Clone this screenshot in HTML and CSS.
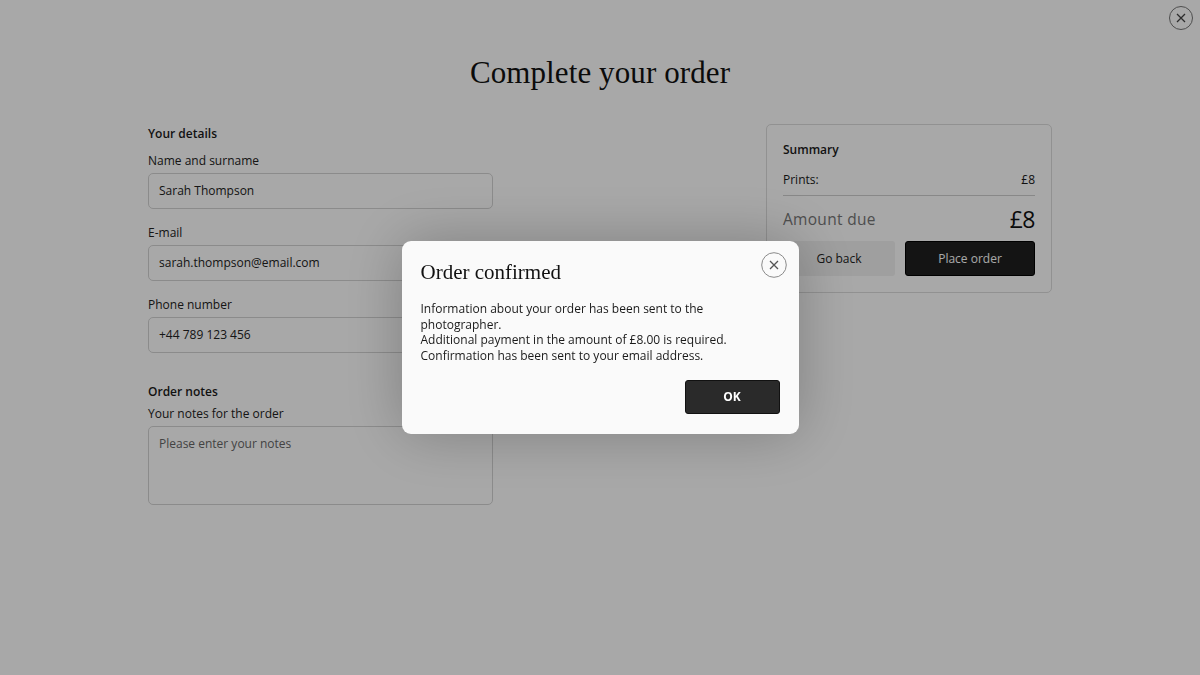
FILE: index.html
```html
<!DOCTYPE html>
<html lang="en">
<head>
<meta charset="utf-8">
<title>Complete your order</title>
<link rel="stylesheet" href="styles.css">
</head>
<body>
<div class="page">
  <button class="page-close" aria-label="Close">
    <svg viewBox="0 0 24 24" width="24" height="24"><circle cx="12" cy="12" r="11.5" fill="none" stroke="#777" stroke-width="1"/><path d="M8 8 L16 16 M16 8 L8 16" stroke="#444" stroke-width="1.3" fill="none"/></svg>
  </button>
  <h1 class="title">Complete your order</h1>
  <div class="columns">
    <form class="details">
      <h2 class="section">Your details</h2>
      <label class="field">
        <span class="label">Name and surname</span>
        <span class="input">Sarah Thompson</span>
      </label>
      <label class="field">
        <span class="label">E-mail</span>
        <span class="input">sarah.thompson@email.com</span>
      </label>
      <label class="field">
        <span class="label">Phone number</span>
        <span class="input">+44 789 123 456</span>
      </label>
      <h2 class="section notes-title">Order notes</h2>
      <label class="field">
        <span class="label">Your notes for the order</span>
        <span class="textarea">Please enter your notes</span>
      </label>
    </form>
    <aside class="summary">
      <h2 class="summary-title">Summary</h2>
      <div class="row"><span>Prints:</span><span>£8</span></div>
      <div class="due"><span class="due-label">Amount due</span><span class="due-value">£8</span></div>
      <div class="actions">
        <button class="btn-light">Go back</button>
        <button class="btn-dark">Place order</button>
      </div>
    </aside>
  </div>
</div>
<div class="overlay">
  <div class="modal">
    <div class="modal-head">
      <h3 class="modal-title">Order confirmed</h3>
      <button class="modal-close" aria-label="Close">
        <svg viewBox="0 0 26 26" width="26" height="26"><circle cx="13" cy="13" r="12.3" fill="#fafafa" stroke="#8a8a8a" stroke-width="1"/><path d="M9 9 L17 17 M17 9 L9 17" stroke="#555" stroke-width="1.3" fill="none"/></svg>
      </button>
    </div>
    <p class="modal-text">Information about your order has been sent to the photographer.<br>Additional payment in the amount of £8.00 is required.<br>Confirmation has been sent to your email address.</p>
    <div class="modal-foot"><button class="btn-ok">OK</button></div>
  </div>
</div>
</body>
</html>
```
FILE: styles.css
```css
* { box-sizing: border-box; }
html, body { margin: 0; padding: 0; }
body {
  background: #fff;
  font-family: "Open Sans", "Noto Sans", sans-serif;
  color: #1a1a1a;
  width: 1200px;
  height: 675px;
  overflow: hidden;
}
button { font-family: inherit; cursor: pointer; }
.page { position: relative; height: 675px; padding-top: 53px; }
.page-close {
  position: absolute; top: 6px; right: 7px;
  width: 24px; height: 24px; padding: 0; border: 0; background: none; display: block;
}
.page-close svg { display: block; }
.title {
  margin: 0;
  text-align: center;
  font-family: "Liberation Serif", serif;
  font-weight: 400;
  font-size: 31px;
  line-height: 40px;
  letter-spacing: 0.1px;
  color: #111;
}
.columns {
  display: flex;
  justify-content: space-between;
  width: 904px;
  margin: 33px auto 0 148px;
}
.details { width: 345px; display: flex; flex-direction: column; }
.section { margin: 0 0 11px; font-size: 12px; font-weight: 600; line-height: 16px; }
.notes-title { margin-top: 15px; margin-bottom: 6px; }
.field { display: flex; flex-direction: column; margin-bottom: 16px; }
.label { font-size: 12px; line-height: 16px; margin-bottom: 4px; color: #222; }
.input, .textarea {
  display: block;
  border: 1px solid #d4d4d4;
  border-radius: 5px;
  font-size: 12px;
  color: #222;
  padding: 0 10px;
  background: #fff;
}
.input { height: 36px; line-height: 34px; }
.textarea { height: 79px; padding-top: 9px; line-height: 16px; color: #666; }
.summary {
  width: 286px;
  margin-top: -2px;
  height: 169px;
  border: 1px solid #dcdcdc;
  border-radius: 5px;
  padding: 17px 16px 16px;
  align-self: flex-start;
}
.summary-title { margin: 0 0 14px; font-size: 12px; font-weight: 600; line-height: 16px; }
.row {
  display: flex; justify-content: space-between;
  font-size: 12px; line-height: 16px;
  padding-bottom: 7px;
  border-bottom: 1px solid #cfcfcf;
}
.due { display: flex; justify-content: space-between; align-items: center; height: 45px; padding-top: 0; }
.due-label { font-size: 15.5px; color: #777; letter-spacing: 0.3px; }
.due-value { font-size: 23px; color: #111; letter-spacing: -0.5px; font-weight: 500; }
.actions { display: flex; gap: 10px; margin-top: 0; }
.actions button { height: 35px; border-radius: 3px; font-size: 12px; border: 0; }
.btn-light { width: 112px; background: #f1f1f1; color: #222; }
.btn-dark { flex: 1; background: #1f1f1f; color: #fff; border: 1px solid #000 !important; }
.overlay {
  position: fixed; inset: 0;
  background: rgba(0, 0, 0, 0.34);
  display: flex; align-items: flex-start; justify-content: center;
}
.modal {
  margin-top: 241px;
  width: 397px;
  height: 193px;
  background: #fafafa;
  border-radius: 9px;
  padding: 11px 19px 20px;
  box-shadow: 0 0 60px rgba(0, 0, 0, 0.25);
}
.modal-head { display: flex; justify-content: space-between; align-items: flex-start; }
.modal-title {
  margin: 7px 0 0;
  font-family: "Liberation Serif", serif;
  font-weight: 400;
  font-size: 21px;
  line-height: 26px;
  color: #111;
}
.modal-close { width: 26px; height: 26px; padding: 0; border: 0; background: none; margin-right: -7px; }
.modal-close svg { display: block; }
.modal-text { margin: 16px 0 0; font-size: 12px; line-height: 15.7px; color: #1a1a1a; }
.modal-foot { display: flex; justify-content: flex-end; margin-top: 16px; }
.btn-ok {
  width: 95px; height: 34px;
  background: #2a2a2a; color: #fff;
  border: 1px solid #111; border-radius: 3px;
  font-size: 12px; font-weight: 700;
}
```
